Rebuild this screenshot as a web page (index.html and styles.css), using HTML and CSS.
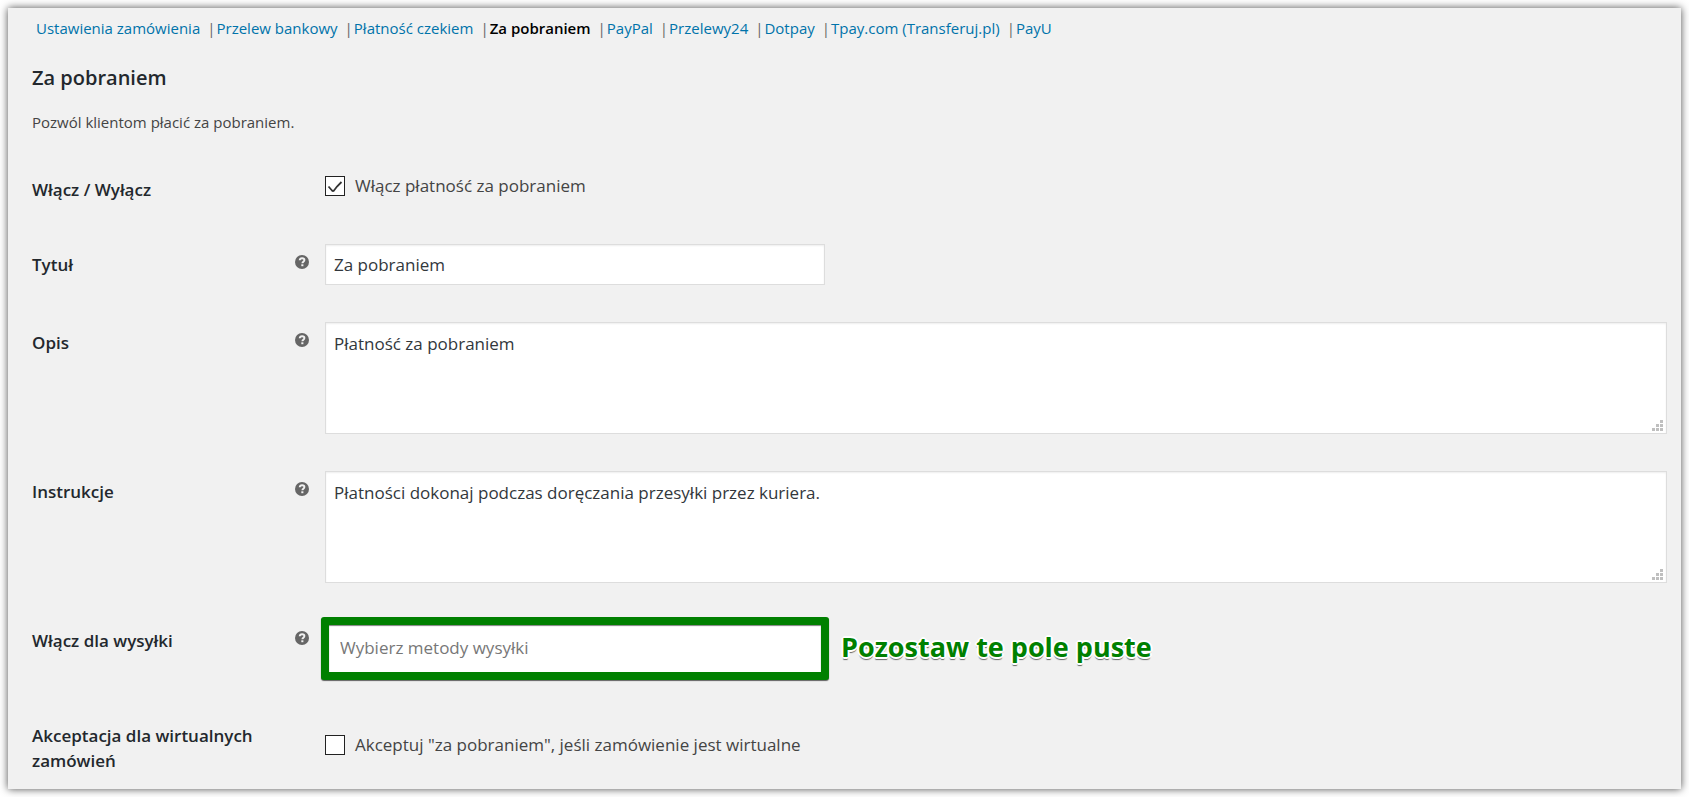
FILE: index.html
```html
<!DOCTYPE html>
<html lang="pl">
<head>
<meta charset="utf-8">
<title>Za pobraniem</title>
<link rel="stylesheet" href="styles.css">
</head>
<body>
<svg class="sprite" aria-hidden="true">
  <symbol id="help" viewBox="0 0 14 14">
    <circle cx="7" cy="7" r="7" fill="#666"/>
    <path d="M4.7 5.3C4.8 3.9 5.7 3.2 7.1 3.2c1.4 0 2.3.8 2.3 1.9 0 1.6-2 1.7-2 3.2" fill="none" stroke="#f1f1f1" stroke-width="1.9"/>
    <rect x="6.3" y="9.3" width="2.1" height="1.9" fill="#f1f1f1"/>
  </symbol>
  <symbol id="grip" viewBox="0 0 11 11">
    <path d="M8 0h3v3H8zM4 4h3v3H4zM8 4h3v3H8zM0 8h3v3H0zM4 8h3v3H4zM8 8h3v3H8z" fill="#bfbfbf"/>
  </symbol>
</svg>
<main class="panel">
  <nav>
    <ul class="tabs">
      <li><a href="#">Ustawienia zamówienia</a></li>
      <li><a href="#">Przelew bankowy</a></li>
      <li><a href="#">Płatność czekiem</a></li>
      <li><a href="#" class="current">Za pobraniem</a></li>
      <li><a href="#">PayPal</a></li>
      <li><a href="#">Przelewy24</a></li>
      <li><a href="#">Dotpay</a></li>
      <li><a href="#">Tpay.com (Transferuj.pl)</a></li>
      <li><a href="#">PayU</a></li>
    </ul>
  </nav>
  <h2>Za pobraniem</h2>
  <p class="intro">Pozwól klientom płacić za pobraniem.</p>
  <form class="settings">
    <div class="row row-toggle">
      <span class="label">Włącz / Wyłącz</span>
      <label class="check"><input type="checkbox" checked> Włącz płatność za pobraniem</label>
    </div>
    <div class="row">
      <label class="label" for="title">Tytuł</label>
      <svg class="help"><use href="#help"/></svg>
      <input class="text" id="title" type="text" value="Za pobraniem">
    </div>
    <div class="row">
      <label class="label" for="desc">Opis</label>
      <svg class="help"><use href="#help"/></svg>
      <div class="area"><textarea class="text" id="desc">Płatność za pobraniem</textarea><svg class="grip"><use href="#grip"/></svg></div>
    </div>
    <div class="row">
      <label class="label" for="instr">Instrukcje</label>
      <svg class="help"><use href="#help"/></svg>
      <div class="area"><textarea class="text" id="instr">Płatności dokonaj podczas doręczania przesyłki przez kuriera.</textarea><svg class="grip"><use href="#grip"/></svg></div>
    </div>
    <div class="row row-shipping">
      <label class="label" for="ship">Włącz dla wysyłki</label>
      <svg class="help"><use href="#help"/></svg>
      <div class="marked">
        <input id="ship" type="text" placeholder="Wybierz metody wysyłki">
        <strong class="note">Pozostaw te pole puste</strong>
      </div>
    </div>
    <div class="row row-virtual">
      <span class="label">Akceptacja dla wirtualnych zamówień</span>
      <label class="check"><input type="checkbox"> Akceptuj "za pobraniem", jeśli zamówienie jest wirtualne</label>
    </div>
  </form>
</main>
</body>
</html>
```
FILE: styles.css
```css
* { box-sizing: border-box; }
body {
  margin: 0;
  padding: 8px;
  background: #fff;
  color: #444;
  font-family: "Open Sans", "Noto Sans", sans-serif;
  font-size: 15px;
}
.sprite { display: none; }
.panel {
  padding: 8px 14px 8px 24px;
  background: #f1f1f1;
  box-shadow: 0 0 8px rgba(0, 0, 0, .7);
}
.tabs {
  display: flex;
  flex-wrap: wrap;
  margin: 0;
  padding: 0 0 0 4px;
  list-style: none;
  line-height: 24px;
}
.tabs li + li::before { content: "|"; margin: 0 1px 0 7px; color: #666; }
.tabs a { color: #0073aa; text-decoration: none; }
.tabs .current { color: #000; font-weight: 600; }
h2 {
  margin: 24px 0 0;
  color: #23282d;
  font-size: 20px;
  font-weight: 600;
  line-height: 28px;
}
.intro { margin: 18px 0 0; line-height: 24px; }
.settings { margin-top: 18px; font-size: 17px; }
.row {
  display: grid;
  grid-template-columns: 263px 30px minmax(0, 1fr);
  align-items: start;
  padding: 18px 0 19px;
}
.label {
  grid-column: 1;
  padding: 8px 24px 0 0;
  color: #23282d;
  font-size: 17px;
  font-weight: 600;
  line-height: 25px;
}
.help { width: 14px; height: 14px; margin-top: 11px; }
.check {
  grid-column: 3;
  display: flex;
  align-items: center;
  gap: 10px;
  line-height: 24px;
}
.check input {
  appearance: none;
  width: 20px;
  height: 20px;
  margin: 0;
  border: 1px solid #222;
  background: #fff;
}
.check input:checked {
  background: #fff url("data:image/svg+xml,%3Csvg xmlns='http://www.w3.org/2000/svg' viewBox='0 0 18 18'%3E%3Cpath d='M2.5 9.5L6 13.5Q7 14.5 8 13.5L11 9.5 15.5 5' fill='none' stroke='%23333' stroke-width='1.8'/%3E%3C/svg%3E");
}
.text {
  display: block;
  width: 100%;
  border: 1px solid #ddd;
  background: #fff;
  box-shadow: inset 0 1px 2px rgba(0, 0, 0, .07);
  color: #32373c;
  font: inherit;
  line-height: 25px;
}
input.text { max-width: 500px; height: 41px; padding: 0 8px; }
.area { position: relative; }
textarea.text { height: 112px; padding: 8px; resize: none; }
.grip { position: absolute; right: 4px; bottom: 3px; width: 11px; height: 11px; }
.row-toggle { padding-top: 22px; padding-bottom: 24px; }
.row-toggle .label { padding-top: 3px; }
.row-shipping { padding-bottom: 18px; }
.marked { display: flex; align-items: center; gap: 12px; margin: -3px 0 0 -4px; }
.marked input {
  width: 508px;
  height: 63px;
  padding: 0 11px 2px;
  border: 8px solid #008000;
  border-radius: 3px;
  background: #fff;
  box-shadow: 0 1px 1px rgba(0, 0, 0, .6), inset 0 1px 1px rgba(0, 0, 0, .5);
  color: #32373c;
  font: inherit;
}
.marked input::placeholder { color: #777; opacity: 1; }
.note {
  padding-bottom: 4px;
  color: #008000;
  font-size: 27px;
  font-weight: 700;
  line-height: 36px;
  text-shadow: 2px 0 #fff, -2px 0 #fff, 0 2px #fff, 0 -2px #fff, 1px 1px #fff, -1px 1px #fff, 1px -1px #fff, -1px -1px #fff, 0 3px 1px #666;
}
.row-virtual { padding-bottom: 8px; }
.row-virtual .label { padding-top: 7px; }
.row-virtual .check { margin-top: 17px; }
```
